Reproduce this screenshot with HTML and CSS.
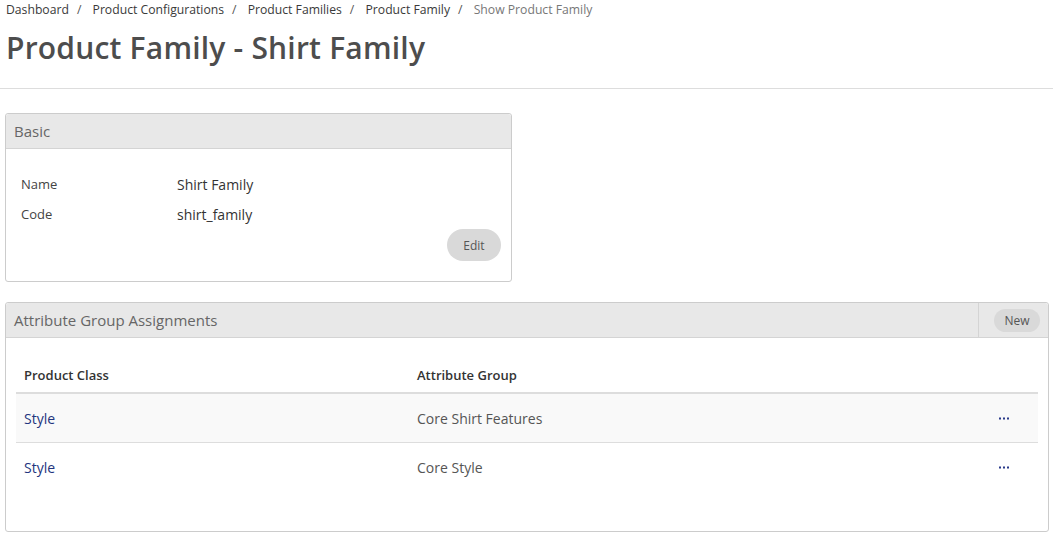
FILE: index.html
```html
<!DOCTYPE html>
<html lang="en">
<head>
<meta charset="utf-8">
<title>Product Family - Shirt Family</title>
<link rel="stylesheet" href="styles.css">
</head>
<body>
<header class="page-header">
  <nav class="breadcrumb">
    <a href="#">Dashboard</a><span class="sep">/</span>
    <a href="#">Product Configurations</a><span class="sep">/</span>
    <a href="#">Product Families</a><span class="sep">/</span>
    <a href="#">Product Family</a><span class="sep">/</span>
    <span class="current">Show Product Family</span>
  </nav>
  <h1 class="page-title">Product Family - Shirt Family</h1>
</header>
<main class="content">
  <section class="card card-basic">
    <div class="card-head"><h2 class="card-title">Basic</h2></div>
    <div class="card-body basic-body">
      <div class="field"><span class="label">Name</span><span class="value">Shirt Family</span></div>
      <div class="field"><span class="label">Code</span><span class="value">shirt_family</span></div>
      <div class="actions"><button class="pill pill-edit">Edit</button></div>
    </div>
  </section>
  <section class="card card-assign">
    <div class="card-head">
      <h2 class="card-title">Attribute Group Assignments</h2>
      <div class="head-tools"><button class="pill pill-new">New</button></div>
    </div>
    <div class="card-body assign-body">
      <table class="grid">
        <thead>
          <tr><th class="c1">Product Class</th><th class="c2">Attribute Group</th><th class="c3"></th></tr>
        </thead>
        <tbody>
          <tr class="odd"><td><a href="#">Style</a></td><td>Core Shirt Features</td><td class="more"><svg class="dots" width="10" height="3" viewBox="0 0 10 3"><rect x="0" y="0.5" width="2" height="2"/><rect x="4" y="0.5" width="2" height="2"/><rect x="8" y="0.5" width="2" height="2"/></svg></td></tr>
          <tr><td><a href="#">Style</a></td><td>Core Style</td><td class="more"><svg class="dots" width="10" height="3" viewBox="0 0 10 3"><rect x="0" y="0.5" width="2" height="2"/><rect x="4" y="0.5" width="2" height="2"/><rect x="8" y="0.5" width="2" height="2"/></svg></td></tr>
        </tbody>
      </table>
    </div>
  </section>
</main>
</body>
</html>
```
FILE: styles.css
```css
* { box-sizing: border-box; }
html, body { margin: 0; padding: 0; background: #fff; }
body { font-family: "Open Sans", "Liberation Sans", sans-serif; color: #333; }
a { text-decoration: none; }

.page-header { border-bottom: 1px solid #dddddd; height: 89px; }
.breadcrumb { padding: 1px 6px 0; font-size: 12.2px; line-height: 18px; color: #333; }
.breadcrumb a { color: #3a3a3a; }
.breadcrumb .sep { margin: 0 8px; color: #555; }
.breadcrumb .current { color: #777; }
.page-title { margin: 9px 0 0 6px; font-size: 30px; line-height: 40px; font-weight: 600; color: #4d4d4d; letter-spacing: 0.2px; }

.content { padding: 24px 4px 0 5px; }
.card { border: 1px solid #cccccc; border-radius: 3px; background: #fff; }
.card-basic { width: 507px; }
.card-assign { margin-top: 20px; }
.card-head { display: flex; align-items: stretch; background: #e8e8e8; border-bottom: 1px solid #d4d4d4; height: 35px; border-radius: 3px 3px 0 0; }
.card-title { flex: 1; margin: 0; padding-left: 8px; font-size: 15px; line-height: 34px; font-weight: 400; color: #666; }
.head-tools { display: flex; align-items: center; border-left: 1px solid #d4d4d4; padding: 0 8px 0 15px; }

.pill { border: 0; border-radius: 16px; background: #d9d9d9; color: #555; font-family: "Open Sans", "Liberation Sans", sans-serif; font-size: 12px; cursor: pointer; }
.pill-edit { height: 32px; width: 54px; }
.pill-new { height: 23px; width: 46px; margin-top: 1px; }

.basic-body { padding: 20px 10px 20px 15px; }
.field { display: flex; align-items: center; height: 30px; }
.label { width: 156px; font-size: 13px; color: #444; }
.value { font-size: 14px; color: #333; }
.actions { display: flex; justify-content: flex-end; }

.assign-body { padding: 20px 10px 40px; }
.grid { width: 100%; border-collapse: collapse; }
.grid th { text-align: left; font-size: 13px; font-weight: 600; color: #333; line-height: 20px; padding: 7px 8px; border-bottom: 2px solid #dddddd; }
.grid th.c1 { width: 393px; }
.grid th.c3 { width: 70px; }
.grid td { font-size: 14px; line-height: 20px; padding: 15px 8px 13px; color: #555; border-bottom: 1px solid #dddddd; }
.grid tbody tr:last-child td { border-bottom: 0; }
.grid tr.odd td { background: #f9f9f9; }
.grid td a { color: #23357e; }
.grid td.more { padding-left: 31px; vertical-align: middle; }
.dots { display: block; fill: #2a3a8a; margin-top: -2px; }
```
